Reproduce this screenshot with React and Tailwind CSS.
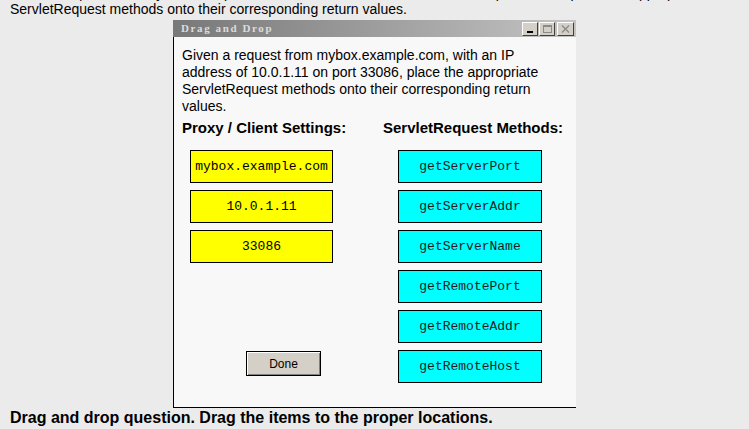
export default function App() {
  const sans = { fontFamily: '"Liberation Sans", Arial, sans-serif' };
  const mono = { fontFamily: '"Liberation Mono", "Courier New", monospace' };
  const yellow = ["mybox.example.com", "10.0.1.11", "33086"];
  const cyan = [
    "getServerPort",
    "getServerAddr",
    "getServerName",
    "getRemotePort",
    "getRemoteAddr",
    "getRemoteHost",
  ];
  return (
    <div className="w-[749px] h-[429px] overflow-hidden bg-[#ebebeb] text-black" style={sans}>
      <div className="pl-[10px] -mt-[15px] text-[14px] leading-[16px] whitespace-nowrap">
        Given a request from mybox.example.com, with an IP address of 10.0.1.11 on port 33086, place the appropriate
        <br />
        ServletRequest methods onto their corresponding return values.
      </div>
      <div className="w-[403px] mx-auto mt-[3px]">
        {/* title bar */}
        <div className="h-[17px] flex items-center justify-between bg-gradient-to-r from-[#787878] to-[#c4c4c4] pl-[8px] pr-[2px]">
          <span
            className="text-[11px] font-bold tracking-[1.6px] text-[#dcdcdc] leading-none"
            style={{ fontFamily: '"Liberation Serif", "DejaVu Serif", serif' }}
          >
            Drag and Drop
          </span>
          <div className="flex gap-[1px]">
            <div className="w-[16px] h-[14px] bg-[#d4d0c8] border border-t-white border-l-white border-r-[#404040] border-b-[#404040] flex items-end justify-center pb-[2px]">
              <div className="w-[6px] h-[2px] bg-black" />
            </div>
            <div className="w-[16px] h-[14px] bg-[#d4d0c8] border border-t-white border-l-white border-r-[#404040] border-b-[#404040] flex items-center justify-center">
              <div className="w-[9px] h-[8px] border border-[#8a8a8a] border-t-2" />
            </div>
            <div className="ml-[1px] w-[17px] h-[14px] bg-[#d4d0c8] border border-t-white border-l-white border-r-[#404040] border-b-[#404040] flex items-center justify-center">
              <svg width="9" height="8" viewBox="0 0 9 8">
                <path d="M1 0.5 L8 7.5 M8 0.5 L1 7.5" stroke="#8a8a8a" strokeWidth="1.4" />
              </svg>
            </div>
          </div>
        </div>
        {/* body */}
        <div className="h-[371px] bg-[#f8f8f8] border-l border-b border-black pl-[8px] pt-[10px]">
          <div className="text-[14px] leading-[17px]">
            Given a request from mybox.example.com, with an IP
            <br />
            address of 10.0.1.11 on port 33086, place the appropriate
            <br />
            ServletRequest methods onto their corresponding return
            <br />
            values.
          </div>
          <div className="flex mt-[4px] text-[15px] leading-[17px] font-bold">
            <div className="w-[201px]">Proxy / Client Settings:</div>
            <div>ServletRequest Methods:</div>
          </div>
          <div className="flex mt-[14px] pl-[8px]">
            <div className="w-[143px] flex flex-col">
              <div className="flex flex-col gap-[7px]">
                {yellow.map((t) => (
                  <div
                    key={t}
                    className="h-[33px] bg-[#ffff00] border border-black flex items-center justify-center text-[13px]"
                    style={mono}
                  >
                    {t}
                  </div>
                ))}
              </div>
              <div className="mt-[88px] ml-[56px] w-[75px] h-[25px] bg-[#d4d0c8] border border-black shadow-[inset_1px_1px_0_#ffffff,inset_-1px_-1px_0_#808080] flex items-center justify-center text-[12px]">
                Done
              </div>
            </div>
            <div className="ml-[65px] w-[144px] flex flex-col gap-[7px]">
              {cyan.map((t) => (
                <div
                  key={t}
                  className="h-[33px] bg-[#00ffff] border border-black flex items-center justify-center text-[13px] text-[#222]"
                  style={mono}
                >
                  {t}
                </div>
              ))}
            </div>
          </div>
        </div>
      </div>
      <div className="pl-[10px] mt-[1px] text-[16px] leading-[18px] font-bold">
        Drag and drop question. Drag the items to the proper locations.
      </div>
    </div>
  );
}
